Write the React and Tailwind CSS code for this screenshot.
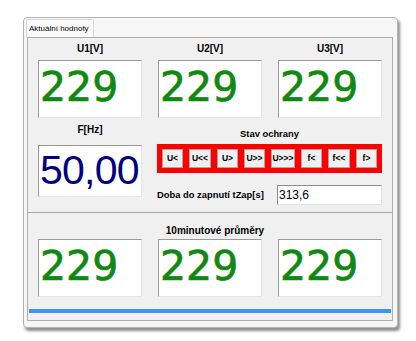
const sans = { fontFamily: '"Liberation Sans", Arial, sans-serif' };

function ValueBox({ value, className = "" }) {
  return (
    <div
      className={`h-[58px] w-[104px] border border-t-[#9a9a9a] border-l-[#9a9a9a] border-b-[#e6e6e6] border-r-[#e6e6e6] bg-white pl-[1px] pt-[6px] text-[41px] leading-none text-[#118811] [-webkit-text-stroke:0.7px_#118811] ${className}`}
      style={{ fontFamily: '"DejaVu Sans", Verdana, sans-serif' }}
    >
      {value}
    </div>
  );
}

function Label({ children, className = "" }) {
  return (
    <div className={`h-[12px] text-center text-[10px] font-bold leading-[12px] text-black ${className}`}>
      {children}
    </div>
  );
}

const flags = [
  { label: "U<", w: "w-[21px]" },
  { label: "U<<", w: "w-[22px]" },
  { label: "U>", w: "w-[21px]" },
  { label: "U>>", w: "w-[21px]" },
  { label: "U>>>", w: "w-[24px]" },
  { label: "f<", w: "w-[21px]" },
  { label: "f<<", w: "w-[22px]" },
  { label: "f>", w: "w-[21px]" },
];

export default function App() {
  return (
    <div className="h-[341px] w-[416px] bg-white pl-[23px] pt-[17px]" style={sans}>
      <div className="flex h-[311px] w-[375px] flex-col rounded-[4px] border border-[#b4b4b4] bg-[#f6f6f6] pl-[3px] pt-[1px] shadow-[2px_3px_3px_rgba(0,0,0,0.45)]">
        {/* tab header */}
        <div className="ml-[-1px] flex h-[18px] w-[68px] items-center rounded-t-[2px] border-l border-r border-t border-[#d8d8d8] bg-[#fbfbfb] pl-[2px] text-[8px] text-black">
          Aktuální hodnoty
        </div>

        {/* tab page */}
        <div className="flex h-[284px] w-[366px] flex-col border border-[#adadad] bg-[#f0f0f0]">
          {/* current values */}
          <div className="h-[175px] border-b border-[#a8a8a8] pl-[10px]">
            <div className="mt-[5px] grid grid-cols-[104px_104px_104px] gap-x-[16px]">
              <Label>U1[V]</Label>
              <Label>U2[V]</Label>
              <Label>U3[V]</Label>
            </div>
            <div className="mt-[5px] grid grid-cols-[104px_104px_104px] gap-x-[16px]">
              <ValueBox value="229" />
              <ValueBox value="229" />
              <ValueBox value="229" />
            </div>

            <div className="mt-[6px] flex gap-x-[15px]">
              <div className="w-[104px]">
                <Label>F[Hz]</Label>
                <div className="mt-[9px] h-[52px] w-[104px] border border-t-[#9a9a9a] border-l-[#9a9a9a] border-b-[#e6e6e6] border-r-[#e6e6e6] bg-white pl-[1px] pt-[4px] text-[41px] leading-none tracking-[-0.75px] text-[#000080]">
                  50,00
                </div>
              </div>

              <div className="w-[225px] pt-[4px]">
                <div className="h-[12px] text-center text-[9.4px] font-bold leading-[12px] text-black">
                  Stav ochrany
                </div>
                <div className="mt-[4px] flex h-[29px] items-center justify-between bg-[#ff0000] px-[5px]">
                  {flags.map((f) => (
                    <div
                      key={f.label}
                      className={`${f.w} flex h-[19px] items-center justify-center border border-[#a7a7a7] bg-[#efefef] text-[8.5px] font-bold text-black`}
                    >
                      {f.label}
                    </div>
                  ))}
                </div>
                <div className="mt-[12px] flex h-[20px] items-center justify-between">
                  <span className="text-[9.4px] font-bold text-black">Doba do zapnutí tZap[s]</span>
                  <div className="flex h-[20px] w-[105px] items-center border border-t-[#8c8c8c] border-l-[#8c8c8c] border-b-[#e3e3e3] border-r-[#e3e3e3] bg-white pl-[1px] text-[12px] text-black">
                    313,6
                  </div>
                </div>
              </div>
            </div>
          </div>

          {/* 10 minute averages */}
          <div className="pl-[10px] pt-[12px]">
            <Label>10minutové průměry</Label>
            <div className="mt-[2px] grid grid-cols-[104px_104px_104px] gap-x-[16px]">
              <ValueBox value="229" />
              <ValueBox value="229" />
              <ValueBox value="229" />
            </div>
          </div>
          <div className="mx-[1px] mt-[12px] h-[4px] bg-[#3b97f3]" />
        </div>
      </div>
    </div>
  );
}
